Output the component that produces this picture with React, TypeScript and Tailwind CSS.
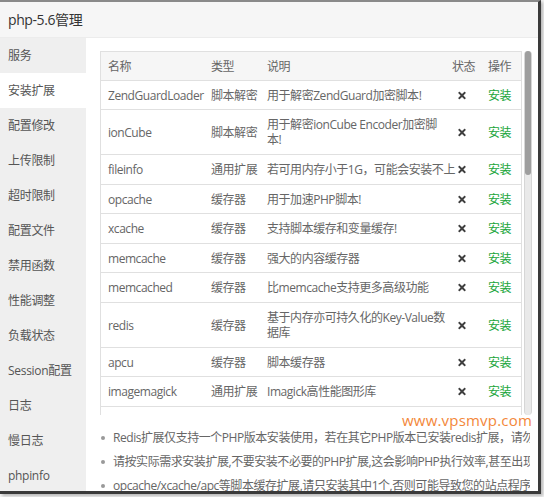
import React from "react";
import { FaTimes } from "react-icons/fa";

const font = { fontFamily: '"Open Sans", "Noto Sans CJK SC", sans-serif' };

const side = [
  "服务",
  "安装扩展",
  "配置修改",
  "上传限制",
  "超时限制",
  "配置文件",
  "禁用函数",
  "性能调整",
  "负载状态",
  "Session配置",
  "日志",
  "慢日志",
  "phpinfo",
];

const rows: { name: string; type: string; desc: string[]; h: string }[] = [
  { name: "ZendGuardLoader", type: "脚本解密", desc: ["用于解密ZendGuard加密脚本!"], h: "h-[29px]" },
  { name: "ionCube", type: "脚本解密", desc: ["用于解密ionCube Encoder加密脚", "本!"], h: "h-[45px]" },
  { name: "fileinfo", type: "通用扩展", desc: ["若可用内存小于1G，可能会安装不上"], h: "h-[30px]" },
  { name: "opcache", type: "缓存器", desc: ["用于加速PHP脚本!"], h: "h-[29px]" },
  { name: "xcache", type: "缓存器", desc: ["支持脚本缓存和变量缓存!"], h: "h-[30px]" },
  { name: "memcache", type: "缓存器", desc: ["强大的内容缓存器"], h: "h-[29px]" },
  { name: "memcached", type: "缓存器", desc: ["比memcache支持更多高级功能"], h: "h-[30px]" },
  { name: "redis", type: "缓存器", desc: ["基于内存亦可持久化的Key-Value数", "据库"], h: "h-[45px]" },
  { name: "apcu", type: "缓存器", desc: ["脚本缓存器"], h: "h-[29px]" },
  { name: "imagemagick", type: "通用扩展", desc: ["Imagick高性能图形库"], h: "h-[30px]" },
  { name: "exif", type: "通用扩展", desc: ["用于读取图片EXIF信息"], h: "h-[30px]" },
];

const notes = [
  "Redis扩展仅支持一个PHP版本安装使用，若在其它PHP版本已安装redis扩展，请勿再装",
  "请按实际需求安装扩展,不要安装不必要的PHP扩展,这会影响PHP执行效率,甚至出现异常",
  "opcache/xcache/apc等脚本缓存扩展,请只安装其中1个,否则可能导致您的站点程序异常",
];

function Row({
  h,
  children,
  head,
}: {
  h: string;
  children: React.ReactNode;
  head?: boolean;
}) {
  return (
    <div
      className={
        "flex items-center border-x border-b border-[#e0e0e0] shrink-0 " +
        h +
        (head ? " bg-[#f6f6f6] border-t" : "")
      }
    >
      {children}
    </div>
  );
}

export default function App() {
  return (
    <div className="w-[544px] h-[497px] bg-[#f4f4f4] overflow-hidden" style={font}>
      <div className="w-[541px] h-[494px] bg-white border-t-2 border-t-[#8a8a8a] border-r-[3px] border-b-[3px] border-r-[#3a3a3a] border-b-[#3a3a3a] flex flex-col overflow-hidden shadow-[2px_2px_3px_rgba(0,0,0,0.25)]">
        <div className="h-[36px] shrink-0 bg-[#f6f6f6] border-b border-[#ececec] flex items-center pl-[8px] text-[14px] text-[#333] tracking-[-0.4px]">
          php-5.6管理
        </div>
        <div className="flex flex-1 min-h-0">
          <div className="w-[86px] shrink-0 bg-[#efefef] flex flex-col">
            {side.map((s, i) => (
              <div
                key={s}
                className={
                  "h-[35px] shrink-0 flex items-center pl-[8px] text-[12px] text-[#555] tracking-[-0.3px] " +
                  (i === 1 ? "bg-white" : "")
                }
              >
                {s}
              </div>
            ))}
          </div>
          <div className="flex-1 relative pl-[14px] pt-[13px] overflow-hidden">
            <div className="flex gap-[2px] h-[364px]">
              <div className="w-[422px] h-[364px] overflow-hidden flex flex-col text-[12px] text-[#666] leading-[15px] tracking-[-0.45px]">
                <Row h="h-[30px]" head>
                  <div className="w-[103px] pl-[7px]">名称</div>
                  <div className="w-[56px] pl-[7px]">类型</div>
                  <div className="w-[185px] pl-[7px]">说明</div>
                  <div className="w-[36px] pl-[7px]">状态</div>
                  <div className="w-[40px] pl-[7px]">操作</div>
                </Row>
                {rows.map((r, idx) => (
                  <Row key={r.name} h={r.h}>
                    <div className={"w-[103px] pl-[7px] whitespace-nowrap " + (idx === 10 ? "invisible" : "")}>
                      {r.name}
                    </div>
                    <div className={"w-[56px] pl-[7px] whitespace-nowrap " + (idx === 10 ? "invisible" : "")}>
                      {r.type}
                    </div>
                    <div className={"w-[185px] pl-[7px] whitespace-nowrap " + (idx === 10 ? "invisible" : "")}>
                      {r.desc.map((d, i) => (
                        <div key={i}>{d}</div>
                      ))}
                    </div>
                    <div className={"w-[36px] pl-[12px] flex items-center " + (idx === 10 ? "invisible" : "")}>
                      <FaTimes className="text-[#3f3f3f] w-[10px] h-[11px]" />
                    </div>
                    <div className={"w-[40px] pl-[7px] text-[#20a53a] whitespace-nowrap " + (idx === 10 ? "invisible" : "")}>
                      安装
                    </div>
                  </Row>
                ))}
              </div>
              <div className="w-[8px] h-[364px] rounded-[4px] bg-[#e9e9e9] border-x border-[#d6d6d6] relative">
                <div className="absolute left-0 right-0 top-0 h-[124px] rounded-[4px] bg-[#9e9e9e]" />
              </div>
            </div>
            <div className="absolute left-[316px] top-[375px] text-[15px] leading-none text-[#f3873a] tracking-[0.2px]">
              www.vpsmvp.com
            </div>
            <ul className="mt-[11px] w-[430px] text-[12px] text-[#666] tracking-[-0.45px]">
              {notes.map((n) => (
                <li key={n} className="h-[24px] leading-[24px] flex items-center whitespace-nowrap overflow-hidden">
                  <span className="w-[4px] h-[4px] rounded-full bg-[#999] shrink-0 ml-[1px] mr-[8px]" />
                  <span>{n}</span>
                </li>
              ))}
            </ul>
          </div>
        </div>
      </div>
    </div>
  );
}
